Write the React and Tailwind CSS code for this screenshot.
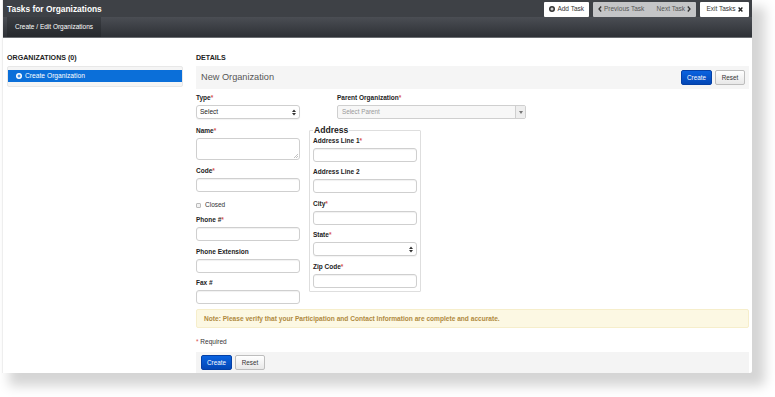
import React from 'react';

const font = { fontFamily: '"Liberation Sans", Arial, sans-serif' };

function Req() {
  return <span className="text-[#d9534f]">*</span>;
}

function Label({ children, req }) {
  return (
    <div className="h-[8px] leading-[8px] mb-[3px] text-[6.5px] font-bold text-[#222]">
      {children}
      {req && <Req />}
    </div>
  );
}

function Input({ className = '' }) {
  return (
    <div
      className={`h-[14px] bg-white border border-[#cfcfcf] rounded-[3px] shadow-[inset_0_1px_1px_rgba(0,0,0,0.06)] ${className}`}
    />
  );
}

function SelectBox({ text }) {
  return (
    <div className="h-[14px] bg-white border border-[#cfcfcf] rounded-[3px] flex items-center justify-between px-[3px] shadow-[0_1px_1px_rgba(0,0,0,0.05)]">
      <span className="text-[6.5px] text-[#222]">{text}</span>
      <svg width="4" height="7" viewBox="0 0 4 7">
        <path d="M0 3 L2 0.5 L4 3 Z M0 4 L2 6.5 L4 4 Z" fill="#333" />
      </svg>
    </div>
  );
}

function Field({ label, req, className = 'mt-[7px]', children }) {
  return (
    <div className={className}>
      <Label req={req}>{label}</Label>
      {children || <Input />}
    </div>
  );
}

export default function App() {
  return (
    <div className="w-[775px] h-[397px] bg-white overflow-hidden" style={font}>
      <div className="ml-[2px] w-[750px] h-[373px] bg-white flex flex-col rounded-br-[2px] shadow-[10px_10px_12px_3px_rgba(0,0,0,0.17)] border-l border-[#eee]">
        {/* top bar */}
        <div className="h-[17px] bg-[#3e4146] flex items-center justify-between pl-[4px] pr-[3px]">
          <span className="text-[8.4px] font-bold text-white mt-[2px]">Tasks for Organizations</span>
          <div className="flex items-center gap-[4px] h-[15px] mt-[1px]">
            <div className="h-full px-[5px] bg-white rounded-[1px] flex items-center gap-[2px] text-[6.5px] text-[#333]">
              <svg width="6" height="6" viewBox="0 0 12 12">
                <circle cx="6" cy="6" r="6" fill="#333" />
                <path d="M6 3v6M3 6h6" stroke="white" strokeWidth="2" />
              </svg>
              Add Task
            </div>
            <div className="h-full w-[103px] bg-[#c4c5c7] rounded-[1px] flex items-center justify-between px-[5px] text-[6.5px] text-[#555]">
              <span className="flex items-center gap-[2px]">
                <svg width="4" height="6" viewBox="0 0 4 6">
                  <path d="M3.2 0.5 L1 3 L3.2 5.5" stroke="#333" strokeWidth="1.3" fill="none" />
                </svg>
                Previous Task
              </span>
              <span className="flex items-center gap-[2px]">
                Next Task
                <svg width="4" height="6" viewBox="0 0 4 6">
                  <path d="M0.8 0.5 L3 3 L0.8 5.5" stroke="#333" strokeWidth="1.3" fill="none" />
                </svg>
              </span>
            </div>
            <div className="h-full w-[49px] bg-white rounded-[1px] flex items-center justify-center gap-[2px] text-[6.5px] text-[#333]">
              Exit Tasks
              <svg width="5" height="5" viewBox="0 0 5 5">
                <path d="M0.6 0.6 L4.4 4.4 M4.4 0.6 L0.6 4.4" stroke="#222" strokeWidth="1.4" />
              </svg>
            </div>
          </div>
        </div>
        {/* tab row */}
        <div className="h-[21px] bg-gradient-to-b from-[#4b4e54] to-[#2e3136] border-b border-[#6b6e72] flex pl-[4px]">
          <div className="w-[94px] h-full bg-gradient-to-b from-[#3a3d42] to-[#26292d] flex items-center justify-center text-[6.5px] text-white">
            Create / Edit Organizations
          </div>
        </div>

        <div className="flex flex-1 pt-[16px]">
          {/* left panel */}
          <div className="w-[176px] ml-[4px]">
            <div className="h-[8px] leading-[8px] text-[7.1px] font-bold text-[#222]">ORGANIZATIONS (0)</div>
            <div className="mt-[4px] h-[21px] bg-[#f5f5f5] border border-[#e8e8e8] rounded-[2px] pt-[3px]">
              <div className="h-[12px] bg-[#0b6fd9] flex items-center pl-[8px] gap-[3px] text-[6.7px] text-white">
                <svg width="6" height="6" viewBox="0 0 12 12">
                  <circle cx="6" cy="6" r="6" fill="white" />
                  <path d="M6 3v6M3 6h6" stroke="#0b6fd9" strokeWidth="2" />
                </svg>
                Create Organization
              </div>
            </div>
          </div>

          {/* details */}
          <div className="ml-[13px] w-[553px]">
            <div className="h-[8px] leading-[8px] text-[7.1px] font-bold text-[#222]">DETAILS</div>
            <div className="mt-[4px] h-[23px] bg-[#f5f5f5] flex items-center justify-between pl-[5px] pr-[4px]">
              <span className="text-[9.2px] text-[#555]">New Organization</span>
              <div className="flex gap-[3px]">
                <div className="w-[31px] h-[15px] rounded-[2px] bg-gradient-to-b from-[#0a63e0] to-[#0447b6] border border-[#0440a5] flex items-center justify-center text-[6.3px] text-white">Create</div>
                <div className="w-[30px] h-[15px] rounded-[2px] bg-gradient-to-b from-white to-[#e8e8e8] border border-[#bdbdbd] flex items-center justify-center text-[6.3px] text-[#333]">Reset</div>
              </div>
            </div>

            {/* row 1 */}
            <div className="flex mt-[5px]">
              <div className="w-[104px]">
                <Label req>Type</Label>
                <SelectBox text="Select" />
              </div>
              <div className="ml-[37px] w-[189px]">
                <Label req>Parent Organization</Label>
                <div className="h-[14px] bg-[#f7f7f7] border border-[#cfcfcf] rounded-[2px] flex items-center justify-between pl-[4px]">
                  <span className="text-[6.3px] text-[#999]">Select Parent</span>
                  <div className="w-[10px] h-full border-l border-[#cfcfcf] bg-[#eee] flex items-center justify-center">
                    <svg width="4" height="3" viewBox="0 0 4 3">
                      <path d="M0 0 L4 0 L2 3 Z" fill="#777" />
                    </svg>
                  </div>
                </div>
              </div>
            </div>

            {/* row 2 */}
            <div className="flex">
              <div className="w-[104px]">
                <Field label="Name" req className="mt-[8px]">
                  <div className="relative h-[22px] bg-white border border-[#cfcfcf] rounded-[3px]">
                    <svg className="absolute right-[1px] bottom-[1px]" width="4" height="4" viewBox="0 0 4 4">
                      <path d="M4 0 L0 4 M4 2 L2 4" stroke="#999" strokeWidth="0.6" />
                    </svg>
                  </div>
                </Field>
                <Field label="Code" req />
                <div className="mt-[9px] h-[8px] flex items-center gap-[4px] text-[6.5px] text-[#333]">
                  <div className="w-[5px] h-[5px] border border-[#bbb] rounded-[1px] bg-[#f3f3f3]" />
                  Closed
                </div>
                <Field label="Phone #" req />
                <Field label="Phone Extension" />
                <Field label="Fax #" className="mt-[6px]" />
              </div>

              <fieldset className="ml-[9px] mt-[6px] w-[112px] h-[167px] border border-[#dedede] rounded-[1px] px-[3px]">
                <legend className="text-[8.6px] font-bold text-[#222] leading-[10px] px-[1px]">Address</legend>
                <Field label="Address Line 1" req className="mt-[2px]" />
                <Field label="Address Line 2" className="mt-[6px]" />
                <Field label="City" req />
                <Field label="State" req className="mt-[6px]">
                  <SelectBox text="" />
                </Field>
                <Field label="Zip Code" req />
              </fieldset>
            </div>

            <div className="mt-[5px] h-[19px] bg-[#fcf8e3] border border-[#f6eecb] rounded-[2px] flex items-center pl-[7px] text-[6.6px] font-bold text-[#b08a3e]">
              Note: Please verify that your Participation and Contact Information are complete and accurate.
            </div>
            <div className="mt-[10px] h-[8px] leading-[8px] text-[6.5px] text-[#333]">
              <Req /> Required
            </div>
            <div className="mt-[6px] h-[21px] bg-[#f4f4f4] flex items-center pl-[5px] gap-[3px]">
              <div className="w-[31px] h-[15px] rounded-[2px] bg-gradient-to-b from-[#0a63e0] to-[#0447b6] border border-[#0440a5] flex items-center justify-center text-[6.3px] text-white">Create</div>
              <div className="w-[30px] h-[15px] rounded-[2px] bg-gradient-to-b from-white to-[#e8e8e8] border border-[#bdbdbd] flex items-center justify-center text-[6.3px] text-[#333]">Reset</div>
            </div>
          </div>
        </div>
      </div>
    </div>
  );
}
